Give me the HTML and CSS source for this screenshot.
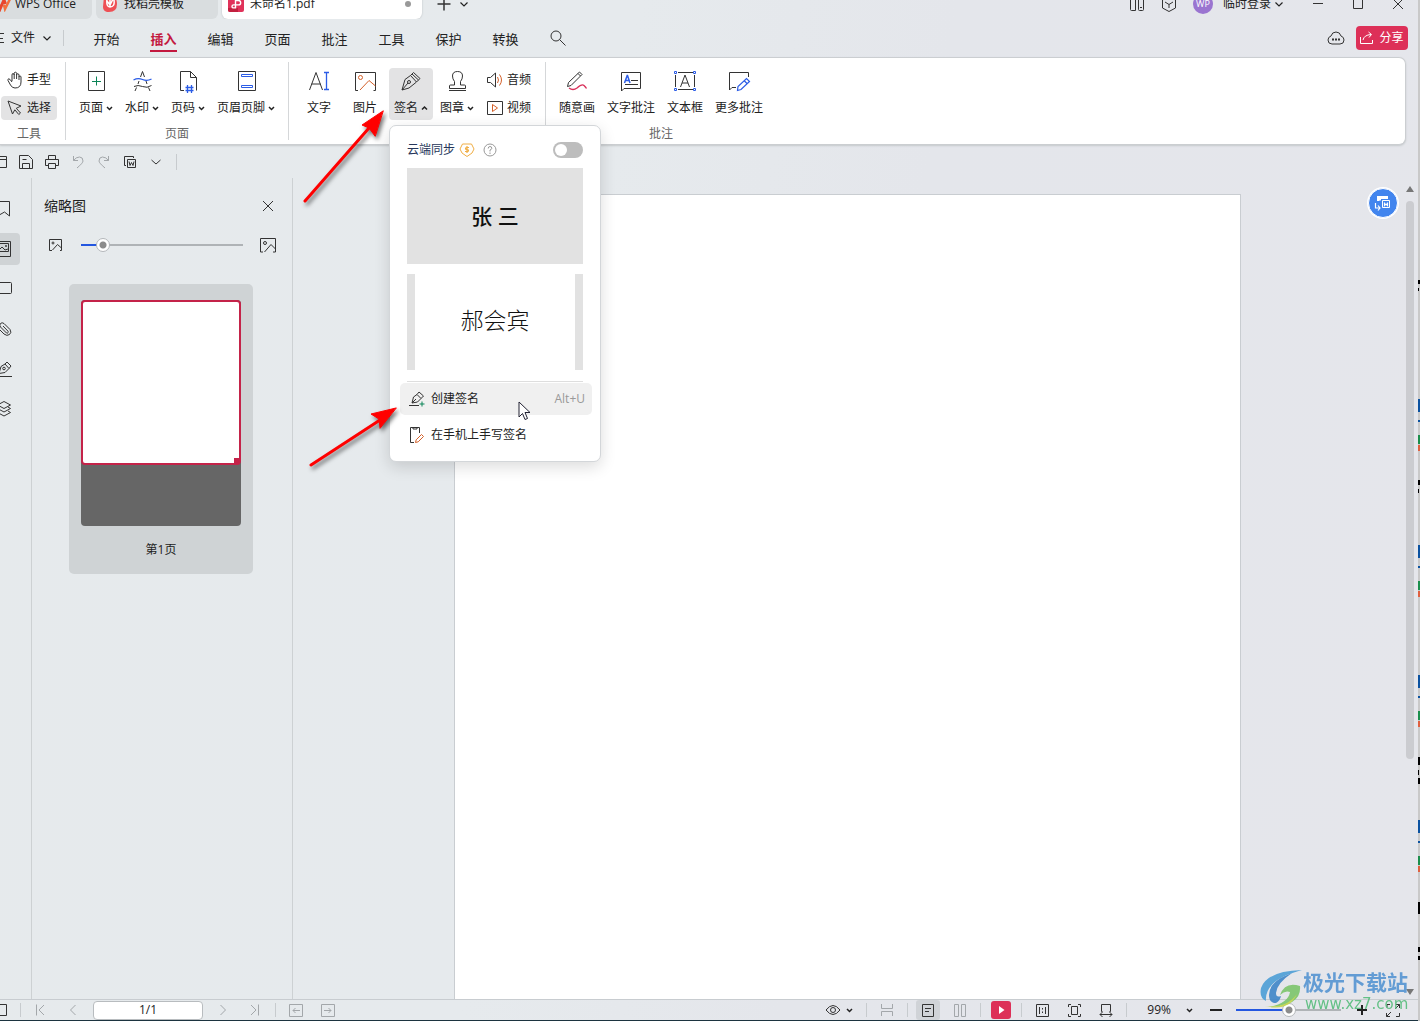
FILE: index.html
```html
<!DOCTYPE html>
<html lang="zh-CN">
<head>
<meta charset="utf-8">
<title>未命名1.pdf - WPS Office</title>
<link rel="stylesheet" href="styles.css">
</head>
<body>
<svg class="defs" aria-hidden="true">
  <symbol id="caret" viewBox="0 0 7 12"><path d="M1 5l2.500 2.500L6 5" fill="none" stroke="currentColor" stroke-width="1.500"/></symbol>
  <symbol id="caret-up" viewBox="0 0 7 12"><path d="M1 7.500L3.500 5 6 7.500" fill="none" stroke="currentColor" stroke-width="1.500"/></symbol>
  <symbol id="chev" viewBox="0 0 12 12"><path d="M2.500 4.500L6 8l3.500-3.500" fill="none" stroke="currentColor" stroke-width="1.200"/></symbol>
</svg>
<div class="app">
  <header class="titlebar">
    <div class="tabs">
      <button class="tab tab-home"><svg width="12" height="16" viewBox="0 0 12 16"><path d="M-3 4l3 9 4-9 1.500 4" fill="none" stroke="#e8452c" stroke-width="3"/><path d="M4 9l1 4 5-10" fill="none" stroke="#f2703d" stroke-width="2.500"/></svg>WPS Office</button>
      <button class="tab tab-store"><svg width="16" height="16" viewBox="0 0 16 16"><path d="M2 0h10q3 3 3 8 0 8-8 8H5q-4-1-4-5z" fill="#ee5055"/><path d="M5 3q-1 8 3 8 5 0 4-7M8 0v11M5 5l3 4 3-6" fill="none" stroke="#fff" stroke-width="1.500"/></svg>找稻壳模板</button>
      <button class="tab tab-doc"><svg width="16" height="16" viewBox="0 0 16 16"><rect width="16" height="16" rx="2" fill="#e0325a"/><path d="M0 12h10v4H2q-2 0-2-2z" fill="#c2203f"/><path d="M7.500 11V4.500h3a2.200 2.200 0 010 4.400h-5a1.500 1.500 0 000 3h2z" fill="none" stroke="#fff" stroke-width="1.400"/></svg>未命名1.pdf<span class="dot"></span></button>
      <button class="icon-btn add" aria-label="新建"><svg width="16" height="16" viewBox="0 0 16 16"><path d="M8 1.500v13M1.500 8h13" stroke="#333" stroke-width="1.500"/></svg></button>
      <button class="icon-btn" aria-label="标签列表"><svg width="12" height="12"><use href="#chev"/></svg></button>
    </div>
    <div class="window-tools">
      <button class="icon-btn" aria-label="设备"><svg width="16" height="16" viewBox="0 0 16 16" class="ln"><path d="M6.500 0v14.500h-4q-1 0-1-1V0M9.500 0v13.500q0 1 1 1h3q1 0 1-1V0M11 11.500h2"/></svg></button>
      <button class="icon-btn" aria-label="应用"><svg width="16" height="16" viewBox="0 0 16 16" class="ln"><path d="M8 1L1.500 4v8L8 15.500l6.500-3.500V4zM4 6l4 2.500L12 6M8 8.500V12"/></svg></button>
      <button class="account"><span class="avatar">WP</span>临时登录<svg width="12" height="12"><use href="#chev"/></svg></button>
      <button class="icon-btn" aria-label="最小化"><svg width="16" height="16" viewBox="0 0 16 16" class="ln"><path d="M3 7.500h10"/></svg></button>
      <button class="icon-btn" aria-label="最大化"><svg width="16" height="16" viewBox="0 0 16 16" class="ln"><path d="M3.500 3.500h9v9h-9z"/></svg></button>
      <button class="icon-btn" aria-label="关闭"><svg width="16" height="16" viewBox="0 0 16 16" class="ln"><path d="M3 3l10 10M13 3L3 13"/></svg></button>
    </div>
  </header>

  <nav class="menubar">
    <button class="file"><svg width="4" height="12" viewBox="0 0 4 12" class="ln"><path d="M0 1.500h4M0 6.500h3M0 10.500h4"/></svg>文件<svg width="12" height="12"><use href="#chev"/></svg></button>
    <span class="vline"></span>
    <div class="menus">
      <button>开始</button><button class="active">插入</button><button>编辑</button><button>页面</button><button>批注</button><button>工具</button><button>保护</button><button>转换</button>
    </div>
    <button class="icon-btn search" aria-label="搜索"><svg width="18" height="18" viewBox="0 0 18 18" class="ln"><circle cx="7" cy="7" r="5"/><path d="M10.500 10.500l6 6"/></svg></button>
    <button class="icon-btn cloud" aria-label="云同步"><svg width="18" height="16" viewBox="0 0 18 16" class="ln"><path d="M5 14q-4 0-4-4 0-3 3-4 1-4 5-4t5 4q3 1 3 4 0 4-4 4z"/><path d="M5 9.500h2M8 9.500h2M11 9.500h2" stroke-width="2"/></svg></button>
    <button class="share"><svg width="14" height="14" viewBox="0 0 14 14" fill="none" stroke="#fff"><path d="M.5 6v6.500h12V9M3 9q1-5 8-5.500M8.500 1L11.500 3.500 9 6.500"/></svg>分享</button>
  </nav>

  <section class="ribbon">
    <div class="group tools">
      <div class="stack">
        <button class="small"><svg width="16" height="18" viewBox="0 0 16 18" class="ln"><path d="M5 10V4q0-1.500 1-1.500T7.200 4v4M7.200 4V2.500q0-1.300 1.200-1.300t1.200 1.300V8M9.600 4q0-1.300 1.100-1.300T12 4v5M12 6q0-1 1-1t1 1v5q0 6-6 6-3 0-4.500-3L1 9.500q-.5-1.500.8-1.700Q3 7.800 5 11"/></svg>手型</button>
        <button class="small on"><svg width="16" height="18" viewBox="0 0 16 18" class="ln"><path d="M1 2l4.500 13 2.300-4.200 4 4.700 1.700-1.500-4.200-4.700L14 7z"/></svg>选择</button>
      </div>
      <div class="caption">工具</div>
    </div>
    <div class="split"></div>
    <div class="group pages">
      <div class="row">
        <button class="big"><svg width="24" height="24" viewBox="0 0 24 24" class="ln"><path d="M4.500 2.500h16v19h-16z"/><path d="M12.500 7.500v9M8 12.500h9" stroke="#0b8457"/></svg><span>页面<svg width="7" height="12"><use href="#caret"/></svg></span></button>
        <button class="big"><svg width="24" height="24" viewBox="0 0 24 24" class="ln"><path d="M10.500 8L12.500 2.500 14.500 8M9 12l-1 3M16 12l1 3M6.500 18.500L5 22M18.500 18.500L20 22M4 17.500q4-2 8.500 0t9-1"/><path d="M3.500 11q4.500-2.500 9-.5t9-.5" stroke="#2b5ce6" stroke-width="1.300"/></svg><span>水印<svg width="7" height="12"><use href="#caret"/></svg></span></button>
        <button class="big"><svg width="24" height="24" viewBox="0 0 24 24" class="ln"><path d="M8 21.500H4.500v-19h10l6 6v13M14.500 2.500v6h6"/><path d="M11.500 16v8M15.500 16v8M9.500 18.500h8M9.500 21.500h8" stroke="#2b5ce6" stroke-width="1.300"/></svg><span>页码<svg width="7" height="12"><use href="#caret"/></svg></span></button>
        <button class="big wide"><svg width="24" height="24" viewBox="0 0 24 24" class="ln"><path d="M4.500 2.500h17v19h-17z"/><path d="M7.500 5.500h11v2h-11zM7.500 16.500h11v2h-11z" stroke="#2b5ce6"/></svg><span>页眉页脚<svg width="7" height="12"><use href="#caret"/></svg></span></button>
      </div>
      <div class="caption">页面</div>
    </div>
    <div class="split"></div>
    <div class="group insert">
      <div class="row">
        <button class="big"><svg width="24" height="24" viewBox="0 0 24 24" class="ln"><path d="M2.500 21L9 3.500 15.500 21M4.500 15h9"/><path d="M19.500 3.500v17M17 3.500h5M17 20.500h5" stroke="#2b5ce6" stroke-width="1.300"/></svg><span>文字</span></button>
        <button class="big"><svg width="24" height="24" viewBox="0 0 24 24" class="ln"><path d="M5 21.500H2.500v-18h20v18h-2"/><circle cx="7.500" cy="8.500" r="2" stroke="#d4602a"/><path d="M7 21l9-9.500 6.500 5.500" stroke="#d4602a"/></svg><span>图片</span></button>
        <div class="sign">
          <button class="big on" aria-expanded="true"><svg width="24" height="24" viewBox="0 0 24 24" class="ln"><path d="M3 21l3-10.500 5.500-4 6 6.500-7.500 6zM3 21l6-7M11.500 6.500l3-3 6.500 6-3.500 3.500M13 5l6.500 6"/><circle cx="10" cy="13" r="1.500"/></svg><span>签名<svg width="7" height="12"><use href="#caret-up"/></svg></span></button>
          <div class="popup">
            <div class="sync"><label for="sync">云端同步</label>
              <svg width="16" height="16" viewBox="0 0 16 16" fill="none" stroke="#f0ae45"><path d="M3.500 2h9L15 7l-2 4-5 3.500L3 11 1 7z" stroke-linejoin="round"/><path d="M10 5.500H7.500q-1 0-1 1t1 1h1q1 0 1 1t-1 1H6M8 4v7" stroke-width="1.200"/></svg>
              <svg width="14" height="14" viewBox="0 0 14 14" fill="none" stroke="#999"><circle cx="7" cy="7" r="6"/><path d="M5.200 5.500q0-2 1.800-2t1.800 1.800Q8.800 6.400 7 7v1.500M7 9.500V11"/></svg>
              <input type="checkbox" role="switch" id="sync">
            </div>
            <button class="preview zhang">张 三</button>
            <button class="preview hao">郝会宾</button>
            <hr>
            <button class="item on"><svg width="16" height="16" viewBox="0 0 16 16" class="ln"><path d="M0 14.500h10M3 12l1.500-6 3.500-2.500 4 4L8.500 11zM3 12l4-4M8 3.500L10 1l4.500 4L12 7.500"/><path d="M13 10.500v5M10.500 13h5" stroke="#0b8457"/></svg>创建签名<kbd>Alt+U</kbd></button>
            <button class="item"><svg width="16" height="16" viewBox="0 0 16 16" class="ln"><path d="M5 15.500H1.500V.5h9V6M4 .5v1.500h4V.5"/><path d="M6.500 15.500l.7-2.700 5.300-5.300 2 2-5.300 5.300z" stroke="#d4602a"/></svg>在手机上手写签名</button>
          </div>
        </div>
        <button class="big"><svg width="24" height="24" viewBox="0 0 24 24" class="ln"><path d="M9.500 16v-3.500Q7.500 10 7.500 7q0-4.500 5-4.500t5 4.500q0 3-2 5.500V16h4q1 0 1 1v2.500h-16V17q0-1 1-1zM4 21.500h17"/></svg><span>图章<svg width="7" height="12"><use href="#caret"/></svg></span></button>
        <div class="stack media">
          <button class="small"><svg width="16" height="16" viewBox="0 0 16 16" class="ln"><path d="M.5 5.500h3l5-4.500v14l-5-4.500h-3z"/><path d="M10.500 5q2 3 0 6M12.500 2.500q4 5.500 0 11" stroke="#d4602a"/></svg>音频</button>
          <button class="small"><svg width="16" height="16" viewBox="0 0 16 16" class="ln"><path d="M.5 1.500h15v13H.5z"/><path d="M5.500 4.500v7l5-3.500z" stroke="#d4602a"/></svg>视频</button>
        </div>
      </div>
    </div>
    <div class="split"></div>
    <div class="group notes">
      <div class="row">
        <button class="big"><svg width="24" height="24" viewBox="0 0 24 24" class="ln"><path d="M2.500 17.500l1-4L14.500 3l2.500 2.500L6 16.500zM13 4.500L15.500 7"/><path d="M4 19q4 3 8 0 5-4.500 7-2.500t2.500 3" stroke="#d8315b" stroke-width="1.300"/></svg><span>随意画</span></button>
        <button class="big"><svg width="24" height="24" viewBox="0 0 24 24" class="ln"><path d="M2.500 22V3.500h19v16H5z"/><path d="M5.500 14l2.700-7.500h.3L11 14M6.500 11.500h4" stroke="#2b5ce6" stroke-width="1.500"/><path d="M12 11.500h7M6 15.500h13"/></svg><span>文字批注</span></button>
        <button class="big"><svg width="24" height="24" viewBox="0 0 24 24" class="ln"><path d="M5 3.500h15M5 20.500h15M2.500 6v12M21.500 6v12M7.500 18L12 6l4.500 12M9 14h6"/><path d="M1.500 2.500h2v2h-2zM20.500 2.500h2v2h-2zM1.500 19.500h2v2h-2zM20.500 19.500h2v2h-2z" stroke="#2b5ce6"/></svg><span>文本框</span></button>
        <button class="big"><svg width="24" height="24" viewBox="0 0 24 24" class="ln"><path d="M21.500 8V3.500h-19V21L5 18.500h4"/><path d="M10.500 21.500l.5-4 8.500-8 3 3-8.500 8zM17 11.500l3 3" stroke="#2b5ce6" stroke-width="1.200"/></svg><span>更多批注</span></button>
      </div>
      <div class="caption">批注</div>
    </div>
  </section>

  <div class="quick">
    <button aria-label="打开"><svg width="16" height="16" viewBox="0 0 16 16" class="ln"><path d="M2.500 2.500h12v11h-12zM8 5.500h6"/></svg></button>
    <button aria-label="保存"><svg width="16" height="16" viewBox="0 0 16 16" class="ln"><path d="M1.500 1.500h9l4 4v9h-13zM4.500 14v-4.500h7V14M4.500 5.500h4"/></svg></button>
    <button aria-label="打印"><svg width="16" height="16" viewBox="0 0 16 16" class="ln"><path d="M4 11.500H1.500v-6h13v6H12M4.500 5V1.500h7V5M4.500 9.500h7v5h-7z"/></svg></button>
    <button aria-label="撤销"><svg width="16" height="16" viewBox="0 0 16 16" class="ln dim"><path d="M3.500 2v4.500H8M3.500 6.500Q6 3 9.500 3T13 7q0 2-6 7"/></svg></button>
    <button aria-label="重做"><svg width="16" height="16" viewBox="0 0 16 16" class="ln dim"><path d="M12.500 2v4.500H8M12.500 6.500Q10 3 6.500 3T3 7q0 2 6 7"/></svg></button>
    <button aria-label="转为Word"><svg width="16" height="16" viewBox="0 0 16 16" class="ln"><path d="M4 11.500H2.500v-9h9V4M5.500 5.500h8v8h-8zM7 7.500l1 4 1.500-3 1.500 3 1-4"/></svg></button>
    <button aria-label="更多"><svg width="16" height="16" viewBox="0 0 16 16" class="ln"><path d="M3.500 6L8 10l4.500-4"/></svg></button>
    <span class="vline"></span>
  </div>

  <main class="work">
    <div class="rail">
      <button aria-label="书签"><svg width="20" height="20" viewBox="0 0 20 20" class="ln"><path d="M3.500 2.500h12V17l-5-4-7 4z"/></svg></button>
      <button class="on" aria-label="缩略图"><svg width="20" height="20" viewBox="0 0 20 20" class="ln"><path d="M3.500 2.500h13v15h-13zM3.500 4.500h11v8h-11zM4 12l4-4 3 3 3-1"/><circle cx="12" cy="7" r=".6"/></svg></button>
      <button aria-label="批注"><svg width="20" height="20" viewBox="0 0 20 20" class="ln"><path d="M2.500 3.500h14q1 0 1 1v9q0 1-1 1h-14z"/></svg></button>
      <button aria-label="附件"><svg width="20" height="20" viewBox="0 0 20 20" class="ln"><path d="M3 8l7 7q3 2.500 5.500.5t.5-5L10 4.500Q8 3 6.500 4.500t0 3.500l6 6q1 .6 1.500-.3t0-1.500L9 7"/></svg></button>
      <button aria-label="签名"><svg width="20" height="20" viewBox="0 0 20 20" class="ln"><path d="M2 17.500h16M5 14.500l2-7 4-2.500 4 4.500-4 4zM11 5l2-2 4 4-2 2.500"/><circle cx="10" cy="9.500" r="1.300"/></svg></button>
      <button aria-label="图层"><svg width="20" height="20" viewBox="0 0 20 20" class="ln"><path d="M10 2.500l6.500 3.500L10 9.500 3.500 6zM14 8l2.500 1.500L10 13 3.500 9.500 6 8M14 12l2.500 1.500L10 17l-6.500-3.500L6 12"/></svg></button>
    </div>
    <aside class="panel">
      <div class="panel-head"><h2>缩略图</h2><button class="icon-btn" aria-label="关闭面板"><svg width="16" height="16" viewBox="0 0 16 16" class="ln"><path d="M3 3l10 10M13 3L3 13"/></svg></button></div>
      <div class="sizer">
        <svg width="14" height="12" viewBox="0 0 14 12" class="ln"><path d="M3 11.500H.5V.5h12v11H11M3.500 11l5-5.500 4 3.500"/><circle cx="4" cy="4" r="1"/></svg>
        <input type="range" class="thumb-range" min="0" max="100" value="10" aria-label="缩略图大小">
        <svg width="16" height="15" viewBox="0 0 16 15" class="ln"><path d="M3 14H.5V.5h15V14H13M4.500 14L11 6.500l4.500 4.500"/><circle cx="5" cy="5" r="1.500"/></svg>
      </div>
      <button class="thumb"><span class="sheet"><span class="view"></span></span>第1页</button>
    </aside>
    <div class="stage">
      <div class="paper"></div>
      <button class="convert" aria-label="转换"><svg width="18" height="18" viewBox="0 0 18 18" fill="none" stroke="#fff"><path d="M4 7V3h9v2" fill="#fff" stroke-width="2"/><path d="M8.500 6.500h7v7h-7z" fill="#4285ee" stroke="#4285ee" stroke-width="3"/><path d="M8.500 6.500h7v7h-7z"/><path d="M10.500 8.500v3l1.500-1.500 1.500 1.500v-3M1.500 9v5h4M4 11.500L6 14l-2 2.500" stroke-width="1.200"/></svg></button>
      <div class="scroll"><svg width="8" height="6" viewBox="0 0 8 6"><path d="M0 6l4-6 4 6z" fill="#777"/></svg><span></span><svg width="8" height="6" viewBox="0 0 8 6"><path d="M0 0l4 6 4-6z" fill="#777"/></svg></div>
    </div>
  </main>

  <footer class="status">
    <button class="first" aria-label="侧栏"><svg width="16" height="16" viewBox="0 0 16 16" class="ln"><path d="M2.500 2.500h12v11h-12z"/></svg></button>
    <span class="vline"></span>
    <button aria-label="首页"><svg width="16" height="16" viewBox="0 0 16 16" class="ln dim"><path d="M3.500 2.500v11M11 3L6 8l5 5"/></svg></button>
    <button aria-label="上一页"><svg width="16" height="16" viewBox="0 0 16 16" class="ln dim"><path d="M10.500 3l-5 5 5 5"/></svg></button>
    <input type="text" value="1/1" aria-label="页码">
    <button aria-label="下一页"><svg width="16" height="16" viewBox="0 0 16 16" class="ln dim"><path d="M5.500 3l5 5-5 5"/></svg></button>
    <button aria-label="末页"><svg width="16" height="16" viewBox="0 0 16 16" class="ln dim"><path d="M11.500 2.500v11M4 3l5 5-5 5"/></svg></button>
    <span class="vline"></span>
    <button aria-label="后退"><svg width="16" height="16" viewBox="0 0 16 16" class="ln dim"><path d="M1.500 2.500h13v12h-13zM5 8.500h7M7.500 6L5 8.500 7.500 11"/></svg></button>
    <button aria-label="前进"><svg width="16" height="16" viewBox="0 0 16 16" class="ln dim"><path d="M1.500 2.500h13v12h-13zM4 8.500h7M8.500 6L11 8.500 8.500 11"/></svg></button>
    <button class="eye" aria-label="视图"><svg width="16" height="16" viewBox="0 0 16 16" class="ln"><path d="M1 8q7-9 14 0-7 9-14 0z"/><circle cx="8" cy="8" r="2.500"/></svg><svg width="7" height="12"><use href="#caret"/></svg></button>
    <span class="vline"></span>
    <button aria-label="连续"><svg width="16" height="16" viewBox="0 0 16 16" class="ln dim"><path d="M2.500 2v4.500h11V2M2.500 14V9.500h11V14"/></svg></button>
    <span class="vline"></span>
    <button class="on" aria-label="单页"><svg width="16" height="16" viewBox="0 0 16 16" class="ln"><path d="M2.500 2.500h11v12h-11zM5 6.500h6M5 9.500h4"/></svg></button>
    <button aria-label="双页"><svg width="16" height="16" viewBox="0 0 16 16" class="ln dim"><path d="M2.500 2.500h4v12h-4zM9.500 2.500h4v12h-4z"/></svg></button>
    <span class="vline"></span>
    <button class="play" aria-label="播放"><svg width="20" height="18" viewBox="0 0 20 18"><rect width="20" height="18" rx="3" fill="#dd3058"/><path d="M8 5v8l5.500-4z" fill="#fff"/></svg></button>
    <span class="vline"></span>
    <button aria-label="实际大小"><svg width="16" height="16" viewBox="0 0 16 16" class="ln"><path d="M2.500 2.500h12v12h-12zM5.500 5v7M11.500 5v7M8.500 6v1.500M8.500 9.500V11"/></svg></button>
    <button aria-label="适合页面"><svg width="16" height="16" viewBox="0 0 16 16" class="ln"><path d="M5.500 4.500h6v8h-6zM2.500 5V2.500H5M12 2.500h2.500V5M14.500 12v2.500H12M5 14.500H2.500V12"/></svg></button>
    <button aria-label="适合宽度"><svg width="16" height="16" viewBox="0 0 16 16" class="ln"><path d="M4.500 9.500H3.500v-7h9v7h-1M2 12.500h12M4.500 10L2 12.500 4.500 15M11.500 10l2.500 2.500-2.500 2.500"/></svg></button>
    <span class="vline"></span>
    <button class="percent">99%<svg width="7" height="12"><use href="#caret"/></svg></button>
    <button aria-label="缩小"><svg width="16" height="16" viewBox="0 0 16 16"><path d="M2 8h12" stroke="#222" stroke-width="2"/></svg></button>
    <input type="range" class="zoom-range" min="0" max="100" value="50" aria-label="缩放">
    <button aria-label="放大"><svg width="16" height="16" viewBox="0 0 16 16"><path d="M4 8h10M9 3v10" stroke="#222" stroke-width="2"/></svg></button>
    <button aria-label="全屏"><svg width="16" height="16" viewBox="0 0 16 16" class="ln"><path d="M11 2.500h3.500V6M14.500 2.500L10 7M5 14.500H1.500V11M1.500 14.500L6 10M2 5.500v-3h3M11 14.500h3.500V11"/></svg></button>
  </footer>
</div>
<div class="behind">
  <svg width="2" height="1021"><path d="M0 280h2v4H0zM0 288h1v3H0zM0 480h2v5H0zM0 489h1v4H0zM0 757h2v8H0zM0 770h1v5H0zM0 778h2v6H0zM0 902h2v12H0zM0 947h2v5H0zM0 956h2v4H0z"/>
    <g id="mark"><path d="M0 399h2v13H0zM0 420h2v2H0z" fill="#0b52a0"/><path d="M0 435h2v9H0z" fill="#1b8f4c"/><path d="M0 445h2v6H0z" fill="#e0603f"/></g>
    <use href="#mark" y="146"/><use href="#mark" y="276"/><use href="#mark" y="421"/></svg>
</div>

<svg class="arrows" width="110" height="380" viewBox="300 100 110 380" aria-hidden="true">
  <g stroke="#f00" stroke-width="3" stroke-linecap="round" fill="#f00"><path d="M305 201L369 128M311 465L380 420" fill="none"/><path d="M383 111l-21 14 7 3 6 8z" stroke-width="1"/><path d="M396 408l-25 6 8 5 1 9z" stroke-width="1"/></g>
</svg>
<svg class="pointer" width="14" height="20" viewBox="0 0 14 20" aria-hidden="true"><path d="M1 1v15l3.500-3.500L7 18.500l2.500-1L7 11.500h5z" fill="#fff" stroke="#223"/></svg>
<div class="watermark">
  <svg width="44" height="44" viewBox="0 0 44 44"><path d="M43 2Q8 3 2 20q-2 10 5 13Q5 12 43 2z" fill="#4d9fd6"/><path d="M33 5Q10 13 10 27q0 8 7 8 4-2 5-7-5 2-5-3Q18 15 33 5z" fill="#3f86c8"/><path d="M41 18q2 20-32 21 20-3 22-15-5-2-10 3 5-14 20-9z" fill="#7cc56c"/><path d="M5 38q22 3 33-12-8 18-33 12z" fill="#c3d64a"/></svg>
  <div><strong>极光下载站</strong><span>www.xz7.com</span></div>
</div>
</body>
</html>
```

FILE: styles.css
```css
* { box-sizing: border-box; }

body {
  margin: 0;
  height: 100vh;
  display: flex;
  overflow: hidden;
  position: relative;
  background: #e5e9ec;
  color: #222;
  font: 12px/20px "Open Sans", "Noto Sans CJK SC", sans-serif;
}

button, input, kbd { font: inherit; color: inherit; }

button {
  display: flex;
  align-items: center;
  justify-content: center;
  margin: 0;
  padding: 0;
  border: 0;
  background: none;
  white-space: nowrap;
}

svg { display: block; flex: none; }
.defs { position: absolute; width: 0; height: 0; }
.ln { fill: none; stroke: #333; stroke-width: 1; }
.dim { stroke: #a3a7aa; }
.vline { width: 1px; height: 16px; background: #c7cbce; flex: none; }

.app {
  flex: 1;
  min-width: 0;
  display: flex;
  flex-direction: column;
  overflow: hidden;
  background: linear-gradient(100deg, #e6eaec 0%, #e6eaed 40%, #e4e6eb 60%, #e5e6eb 100%);
  border-bottom: 1px solid #1c3440;
}

.behind { width: 2px; overflow: hidden; background: #c9c9c9; }

/* title bar */
.titlebar {
  height: 19px;
  display: flex;
  align-items: flex-end;
  justify-content: space-between;
  overflow: hidden;
  flex: none;
}
.tabs, .window-tools { display: flex; height: 30px; flex: none; }
.tab {
  justify-content: flex-start;
  gap: 6px;
  margin-right: 4px;
  border-radius: 6px;
  background: #d9dddf;
}
.tab-home { width: 92px; gap: 3px; border-radius: 0 6px 6px 0; }
.tab-store { width: 122px; padding-left: 6px; }
.tab-doc { width: 200px; padding: 0 11px 0 6px; background: #fff; box-shadow: 0 0 2px #b5babd; }
.dot { width: 6px; height: 6px; margin-left: auto; border-radius: 50%; background: #999; }
.icon-btn { width: 24px; }
.add { margin: 0 2px 0 6px; width: 24px; }
.tabs .icon-btn:last-child { width: 12px; }
.window-tools { gap: 16px; padding-right: 8px; align-items: center; }
.window-tools .icon-btn { width: 24px; }
.window-tools .icon-btn:nth-child(-n+2) { width: 16px; }
.account { gap: 2px; margin-right: 5px; }
.avatar {
  width: 20px;
  height: 20px;
  margin-right: 8px;
  border-radius: 50%;
  background: #9a74d0;
  color: #fff;
  font-size: 9px;
}

/* menu bar */
.menubar { height: 38px; display: flex; align-items: center; padding-right: 10px; flex: none; }
.file { gap: 6px; padding-right: 10px; }
.file svg:first-child { margin-right: 1px; }
.menus { display: flex; margin-left: 14px; }
.menus button { width: 57px; height: 28px; padding-top: 2px; font-size: 13px; position: relative; }
.menus .active { color: #c3193f; font-weight: 700; }
.menus .active::after {
  content: "";
  position: absolute;
  left: 15px;
  right: 15px;
  bottom: 0;
  height: 2px;
  background: #c3193f;
}
.search { margin-left: 12px; }
.cloud { margin-left: auto; margin-right: 8px; }
.share {
  width: 52px;
  height: 24px;
  gap: 5px;
  border-radius: 4px;
  background: #dd3058;
  color: #fff;
}

/* ribbon */
.ribbon {
  display: flex;
  flex: none;
  margin-right: 12px;
  border: 1px solid #cbced1;
  border-left: 0;
  border-radius: 0 7px 7px 0;
  background: #fff;
  box-shadow: 0 1px 2px #c5c9cc;
}
.group { padding-top: 10px; }
.row { display: flex; gap: 2px; height: 52px; }
.caption { margin-top: 4px; text-align: center; color: #666; }
.split { width: 1px; margin: 4px 0; background: #d5d7d9; }
.tools { width: 65px; padding-left: 1px; padding-right: 8px; }
.pages { padding-left: 8px; padding-right: 8px; }
.insert { width: 256px; padding-left: 8px; }
.notes { width: 230px; padding: 10px 5px 0; }
.big {
  flex-direction: column;
  justify-content: flex-start;
  gap: 5px;
  width: 44px;
  height: 52px;
  padding-top: 1px;
  border-radius: 4px;
}
.big span { display: flex; align-items: center; gap: 3px; }
.wide { width: 68px; }
.notes .big { width: 52px; }
.on { background: #e3e3e4; }
.stack { display: flex; flex-direction: column; gap: 4px; height: 52px; }
.small { height: 24px; gap: 4px; padding: 0 6px; border-radius: 4px; justify-content: flex-start; }

/* signature menu */
.sign { position: relative; }
.popup {
  position: absolute;
  z-index: 2;
  left: 0;
  top: 57px;
  width: 212px;
  padding: 16px 17px 6px;
  border: 1px solid #d3d6d9;
  border-radius: 7px;
  background: #fff;
  box-shadow: 0 5px 16px rgba(0, 0, 0, .14);
}
.sync { display: flex; align-items: center; height: 16px; margin-bottom: 10px; color: #26365a; }
.sync svg { margin-left: 4px; }
.sync svg + svg { margin-left: 8px; }
.sync input {
  appearance: none;
  width: 30px;
  height: 16px;
  margin: 0 0 0 auto;
  padding: 2px;
  border-radius: 8px;
  background: #bdbdbd;
}
.sync input::before { content: ""; display: block; width: 12px; height: 12px; border-radius: 50%; background: #fff; }
.preview { width: 100%; height: 96px; margin-bottom: 10px; background: #e2e2e2; color: #111; }
.zhang { font-size: 21px; font-weight: 500; }
.hao { font-size: 23px; font-weight: 300; padding-bottom: 4px; background: #fff; border: solid #e2e2e2; border-width: 0 8px; }
.popup hr { height: 1px; margin: 11px 0 1px; border: 0; background: #dedede; }
.item {
  width: 192px;
  height: 32px;
  margin: 0 -7px 4px;
  padding: 0 7px 0 9px;
  gap: 6px;
  border-radius: 5px;
  justify-content: flex-start;
}
.item.on { background: #f0f0f0; }
.item kbd { margin-left: auto; color: #999; }

/* quick access */
.quick { display: flex; align-items: center; height: 33px; margin-left: -13px; flex: none; }
.quick button { width: 26px; height: 26px; }
.quick .vline { margin-left: 7px; }

/* work area */
.work { flex: 1; display: flex; min-height: 0; }
.rail {
  width: 32px;
  padding-top: 15px;
  display: flex;
  flex-direction: column;
  gap: 8px;
  border-right: 1px solid #cdd1d3;
  flex: none;
}
.rail button { width: 32px; height: 32px; margin-left: -12px; border-radius: 4px; flex: none; }
.rail .on { background: #cfd3d5; }

.panel { width: 261px; padding: 16px 16px 0 12px; border-right: 1px solid #cdd1d3; flex: none; }
.panel-head { display: flex; justify-content: space-between; align-items: center; height: 24px; }
.panel-head h2 { margin: 0; font-size: 14px; font-weight: 400; }
.panel-head .icon-btn { width: 16px; }
.sizer { display: flex; align-items: center; margin-top: 17px; padding-left: 5px; height: 20px; }

input[type="range"] { appearance: none; margin: 0; height: 14px; background: none; }
input[type="range"]::-webkit-slider-runnable-track { height: 2px; background: #afb3b6; }
input[type="range"]::-webkit-slider-thumb {
  appearance: none;
  width: 14px;
  height: 14px;
  margin-top: -6px;
  border: 1px solid #b5b8bb;
  border-radius: 50%;
  background: radial-gradient(circle, #8c8c8c 3px, #fff 4px);
}
.thumb-range { flex: 1; min-width: 0; margin: 0 17px 0 18px !important; }
.thumb-range::-webkit-slider-runnable-track { background: linear-gradient(90deg, #2457e0 14%, #afb3b6 14%) !important; }
.zoom-range { width: 105px; }
.zoom-range::-webkit-slider-runnable-track { background: linear-gradient(90deg, #2457e0 50%, #afb3b6 50%) !important; }

.thumb {
  flex-direction: column;
  justify-content: flex-start;
  gap: 14px;
  width: 184px;
  height: 290px;
  margin: 29px 0 0 25px;
  padding-top: 16px;
  border-radius: 5px;
  background: #cfd3d5;
}
.sheet { width: 160px; height: 226px; border-radius: 4px; background: #666; }
.view {
  display: block;
  height: 165px;
  border: 2px solid #c42349;
  border-radius: 4px;
  background: linear-gradient(#c42349, #c42349) right bottom / 5px 5px no-repeat, #fff;
}

.stage { flex: 1; position: relative; display: flex; padding: 16px 177px 0 161px; min-width: 0; }
.paper { flex: 1; border: 1px solid #c9cdd1; border-bottom: 0; background: #fff; }
.convert {
  position: absolute;
  top: 10px;
  right: 20px;
  width: 30px;
  height: 30px;
  border: 1px solid #fff;
  border-radius: 50%;
  background: #4285ee;
  box-shadow: 0 0 0 1px #fff;
}
.scroll {
  position: absolute;
  top: 8px;
  bottom: 4px;
  right: 4px;
  display: flex;
  flex-direction: column;
  justify-content: space-between;
}
.scroll span { width: 8px; height: 69%; margin: 9px 0 auto; border-radius: 4px; background: #cbccd0; }

/* status bar */
.status {
  display: flex;
  align-items: center;
  gap: 8px;
  height: 21px;
  padding-right: 13px;
  border-top: 1px solid #c8ccd0;
  flex: none;
}
.status button { width: 24px; height: 20px; flex: none; }
.status .first { margin-left: -12px; }
.status .vline { height: 14px; }
.status input[type="text"] {
  width: 110px;
  height: 19px;
  padding: 0;
  border: 1px solid #b8bcbf;
  border-radius: 4px;
  background: #fff;
  text-align: center;
}
.status .eye { width: 38px; margin-left: auto; gap: 5px; }
.status .percent { width: 61px; padding-right: 3px; gap: 15px; justify-content: flex-end; }
.status .on { background: #d0d3d7; border-radius: 3px; }

/* overlays */
.arrows {
  position: absolute;
  z-index: 3;
  left: 300px;
  top: 100px;
  filter: drop-shadow(2px 3px 2px rgba(0, 0, 0, .55));
  pointer-events: none;
}
.pointer { position: absolute; z-index: 3; left: 518px; top: 401px; }
.watermark {
  position: absolute;
  right: 10px;
  bottom: 7px;
  display: flex;
  opacity: .9;
  pointer-events: none;
}
.watermark div { display: flex; flex-direction: column; width: 107px; padding-top: 2px; }
.watermark strong { font-size: 21px; line-height: 24px; color: #5595d2; }
.watermark span { font: 15px/20px "DejaVu Sans", sans-serif; color: #57bd7c; padding-left: 2px; }
```
